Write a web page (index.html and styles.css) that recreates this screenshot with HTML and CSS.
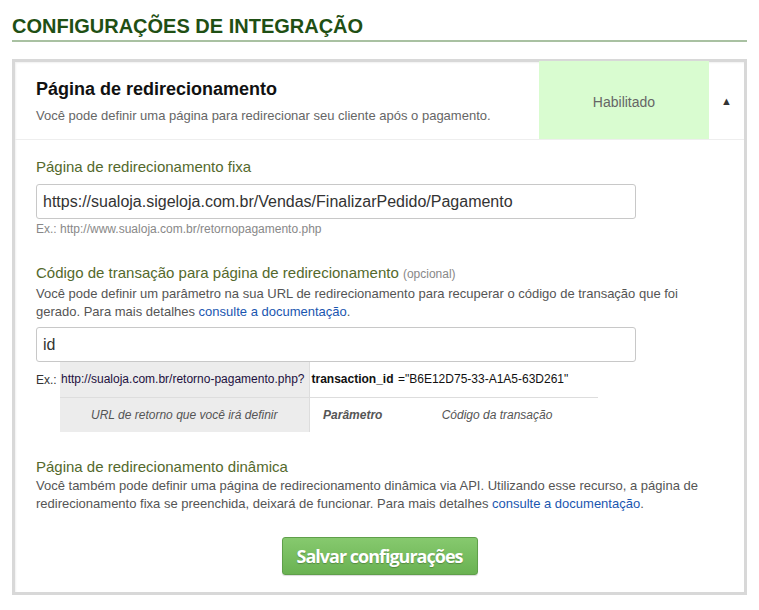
FILE: index.html
```html
<!DOCTYPE html>
<html lang="pt-BR">
<head>
<meta charset="utf-8">
<title>Configurações de integração</title>
<link rel="stylesheet" href="styles.css">
</head>
<body>
<div class="page">
  <h1 class="page-title">CONFIGURAÇÕES DE INTEGRAÇÃO</h1>
  <div class="panel">
    <div class="panel-head">
      <div class="head-text">
        <h2 class="head-title">Página de redirecionamento</h2>
        <p class="head-sub">Você pode definir uma página para redirecionar seu cliente após o pagamento.</p>
      </div>
      <div class="status">Habilitado</div>
      <div class="toggle">▲</div>
    </div>
    <div class="panel-body">
      <div class="field">
        <label class="label">Página de redirecionamento fixa</label>
        <input class="input" type="text" value="https://sualoja.sigeloja.com.br/Vendas/FinalizarPedido/Pagamento">
        <div class="hint">Ex.: http://www.sualoja.com.br/retornopagamento.php</div>
      </div>
      <div class="field field-2">
        <label class="label">Código de transação para página de redirecionamento <span class="opt">(opcional)</span></label>
        <p class="desc">Você pode definir um parâmetro na sua URL de redirecionamento para recuperar o código de transação que foi gerado. Para mais detalhes <a href="#">consulte a documentação</a>.</p>
        <input class="input" type="text" value="id">
        <div class="example">
          <span class="ex-label">Ex.:</span>
          <table class="ex-table">
            <tr>
              <td class="c-url">http://sualoja.com.br/retorno-pagamento.php?</td>
              <td class="c-param">transaction_id</td>
              <td class="c-code">="B6E12D75-33-A1A5-63D261"</td>
            </tr>
            <tr class="row-desc">
              <td class="c-url">URL de retorno que você irá definir</td>
              <td class="c-param">Parâmetro</td>
              <td class="c-code">Código da transação</td>
            </tr>
          </table>
        </div>
      </div>
      <div class="field field-3">
        <label class="label">Página de redirecionamento dinâmica</label>
        <p class="desc">Você também pode definir uma página de redirecionamento dinâmica via API. Utilizando esse recurso, a página de redirecionamento fixa se preenchida, deixará de funcionar. Para mais detalhes <a href="#">consulte a documentação</a>.</p>
      </div>
      <div class="actions">
        <button class="btn-save" type="button">Salvar configurações</button>
      </div>
    </div>
  </div>
</div>
</body>
</html>
```

FILE: styles.css
```css
* { box-sizing: border-box; }
html, body { margin: 0; padding: 0; background: #fff; }
body { font-family: "Liberation Sans", Arial, sans-serif; color: #333; }

.page { padding: 12px 12px 0 12px; }

.page-title {
  margin: 0;
  font-size: 20px;
  font-weight: bold;
  color: #1f4f14;
  line-height: 28px;
  border-bottom: 2px solid #a9c1a2;
  height: 30px;
}

.panel {
  margin-top: 17px;
  border: 3px solid #d8d8d8;
  box-shadow: inset 1px 1px 2px rgba(0,0,0,0.06);
  width: 735px;
}

.panel-head {
  display: flex;
  border-bottom: 1px solid #eee;
  height: 78px;
}
.head-text { flex: 1; padding: 17px 0 0 21px; }
.head-title { margin: 0; font-size: 18px; font-weight: bold; color: #111; line-height: 20px; }
.head-sub { margin: 9px 0 0; font-size: 13px; color: #666; line-height: 16px; }

.status {
  width: 170px;
  background: #d9fcd0;
  color: #666;
  font-size: 14px;
  display: flex;
  align-items: center;
  justify-content: center;
  padding-top: 4px;
  margin-top: -1px;
}
.toggle {
  width: 35px;
  font-size: 11px;
  color: #333;
  display: flex;
  align-items: center;
  justify-content: center;
  padding-top: 1px;
}

.panel-body { padding: 18px 21px 17px 21px; }

.field { display: flex; flex-direction: column; align-items: flex-start; }
.label { font-size: 15px; color: #54692c; line-height: 18px; }
.opt { font-size: 12px; color: #888; }
.input {
  margin-top: 8px;
  width: 600px;
  height: 35px;
  border: 1px solid #c8c8c8;
  border-radius: 3px;
  padding: 0 6px;
  font-family: "Liberation Sans", Arial, sans-serif;
  font-size: 16px;
  color: #333;
  background: #fff;
}
.hint { font-size: 12px; color: #888; margin-top: 3px; line-height: 14px; }

.field-2 { margin-top: 28px; }
.desc { margin: 2px 0 0; font-size: 13px; line-height: 18px; color: #555; }
.desc a { color: #1a56b0; text-decoration: none; }
.field-2 .input { margin-top: 6px; }

.example { display: flex; align-items: flex-start; }
.ex-label { font-size: 12px; color: #333; width: 24px; padding-top: 11px; }
.ex-table { border-collapse: collapse; font-size: 12px; table-layout: fixed; width: 538px; }
.ex-table td { height: 35px; padding: 0 2px; border-bottom: 1px solid #ddd; white-space: nowrap; color: #111; }
.ex-table .row-desc td { border-bottom: 0; color: #555; font-style: italic; text-align: center; }
.ex-table .c-url { background: #ececec; width: 249px; color: #222; border-right: 1px solid #ddd; }
.ex-table tr:first-child .c-url { color: #1d1040; padding-left: 1px; }
.ex-table .c-param { width: 87px; font-weight: bold; }
.ex-table .c-code { width: 202px; }

.field-3 { margin-top: 26px; }
.field-3 .desc { margin-top: 1px; }

.actions { display: flex; justify-content: center; margin-top: 24px; }
.btn-save {
  font-family: "Open Sans", sans-serif;
  font-weight: 700;
  font-size: 18px;
  letter-spacing: -1px;
  color: #fff;
  text-shadow: 0 1px 1px rgba(0,0,0,0.25);
  background: linear-gradient(#86c96e, #6ab252);
  border: 1px solid #5f9f4a;
  border-radius: 3px;
  width: 196px;
  height: 38px;
  padding: 0;
  box-shadow: 0 1px 1px rgba(0,0,0,0.15);
}
```
